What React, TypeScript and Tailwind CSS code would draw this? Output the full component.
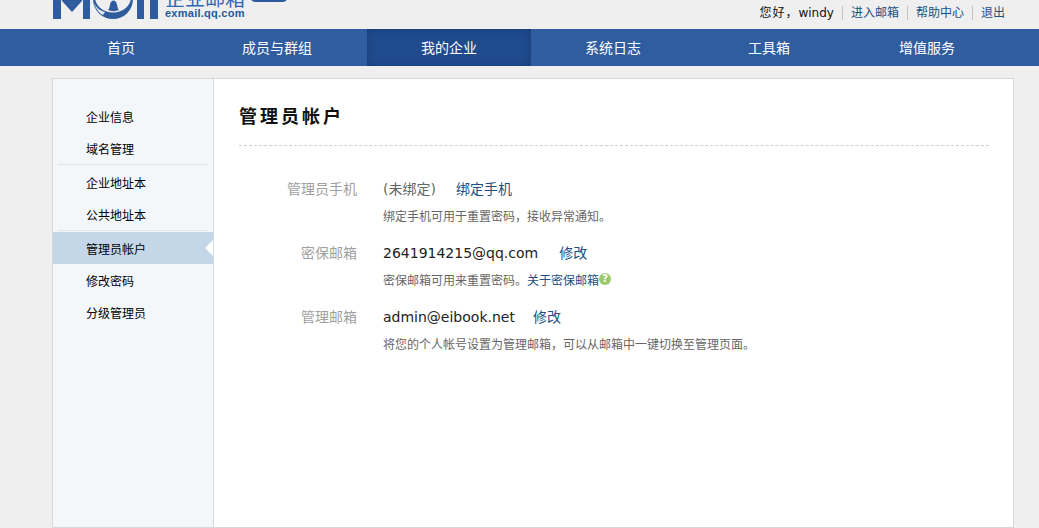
const font = "font-['DejaVu_Sans','Noto_Sans_CJK_SC',sans-serif]";

function NavItem({ label, width, extra, active }: { label: string; width: string; extra?: string; active?: boolean }) {
  return (
    <div
      className={`${width} ${extra ?? ""} h-full flex items-center justify-center pt-[2px] text-[14px] text-white ${
        active ? "bg-[#1f4a8c] shadow-[inset_0_0_6px_#173b73]" : ""
      }`}
    >
      {label}
    </div>
  );
}

function SideItem({ label, active, low }: { label: string; active?: boolean; low?: boolean }) {
  return (
    <div
      className={`relative h-8 flex items-center pl-[33px] text-[12px] text-black ${low ? "pt-[4px]" : "pt-[2px]"} ${active ? "bg-[#c4d7e9]" : ""}`}
    >
      {label}
      {active && (
        <span className="absolute right-0 top-[8px] w-0 h-0 border-y-[8px] border-y-transparent border-r-[8px] border-r-white" />
      )}
    </div>
  );
}

function Row({ label, children, note }: { label: string; children: React.ReactNode; note: React.ReactNode }) {
  return (
    <div className="flex h-16">
      <div className="w-[118px] text-right text-[14px] text-[#a0a0a0] leading-[20px] pt-[9px]">{label}</div>
      <div className="ml-[26px]">
        <div className="flex text-[14px] leading-[20px] pt-[9px] text-[#222]">{children}</div>
        <div className="text-[12px] leading-[18px] mt-[9px] text-[#666] flex items-center">{note}</div>
      </div>
    </div>
  );
}

export default function App() {
  return (
    <div className={`${font} w-[1039px] h-[528px] overflow-hidden bg-[#efefef] flex flex-col`}>
      <header className="h-[29px] shrink-0 flex relative">
        <div className="ml-[53px] w-[106px] h-[19px] overflow-hidden">
          <svg width="106" height="19" viewBox="0 0 106 19" className="block" fill="#2f5c9f">
            <path d="M0 0h8v19H0zM30 0h7v19h-7zM9 0h20v1L19 12 9 1z" />
            <circle cx="60" cy="-1" r="20" />
            <ellipse cx="60" cy="-3" rx="18" ry="15.500" fill="#efefef" />
            <path d="M41 3c3 6 7 8 11 9l-2 3c-4-2-7-6-9-12z" fill="#efefef" />
            <path d="M55 10c1.500-1 1.500-4 2.500-7 1-3.500 5-3.500 6 0 1 3 1 6 2.500 7-3 1.500-8 1.500-11 0z" />
            <path d="M84 0h7v19h-7zM97 0h8v19h-8z" />
          </svg>
        </div>
        <div className="ml-[6px] relative w-[135px] h-[29px] overflow-hidden">
          <div className="absolute left-0 top-[-10px] text-[20px] leading-[18px] text-[#2f6ab0]">企业邮箱</div>
          <div className="absolute left-[85px] top-[-9px] w-[38px] h-[11px] rounded-[5px] border border-[#2f5c9f] bg-[linear-gradient(#fff_0_7px,#2f5c9f_7px)]" />
          <div className="absolute left-0 top-[8px] font-['Liberation_Sans'] text-[11px] leading-[11px] font-bold tracking-[0.25px] text-[#1d5a9e]">exmail.qq.com</div>
        </div>
        <div className="ml-auto mr-[34px] pt-[2px] flex items-center h-[24px] text-[12px]">
          <span className="text-[#111]">
            <span className="tracking-[1px]">您好，</span>windy
          </span>
          <span className="w-px h-[14px] bg-[#c4c4c4] ml-[8px] mr-[8px]" />
          <span className="text-[#215080]">进入邮箱</span>
          <span className="w-px h-[14px] bg-[#c4c4c4] ml-[8px] mr-[8px]" />
          <span className="text-[#215080]">帮助中心</span>
          <span className="w-px h-[14px] bg-[#c4c4c4] ml-[8px] mr-[8px]" />
          <span className="text-[#215080]">退出</span>
        </div>
      </header>
      <nav className="h-[37px] shrink-0 bg-[#305ca0] flex pl-[39px]">
        <NavItem label="首页" width="w-[164px]" />
        <NavItem label="成员与群组" width="w-[148px]" extra="mr-[16px]" />
        <NavItem label="我的企业" width="w-[164px]" active />
        <NavItem label="系统日志" width="w-[164px]" />
        <NavItem label="工具箱" width="w-[148px]" />
        <NavItem label="增值服务" width="w-[168px]" />
      </nav>
      <main className="mt-3 ml-[52px] w-[962px] flex-1 border border-[#d8d8d8] bg-white flex min-h-0">
        <aside className="w-[161px] shrink-0 bg-[#f4f7fa] border-r border-[#d3dae0] pt-[22px]">
          <SideItem label="企业信息" />
          <SideItem label="域名管理" />
          <div className="mx-[5px] h-[3px] -mt-px border-t border-[#dfe5ea]" />
          <SideItem label="企业地址本" />
          <SideItem label="公共地址本" />
          <div className="mx-[5px] h-[2px] -mt-px border-t border-[#dfe5ea]" />
          <SideItem label="管理员帐户" active low />
          <SideItem label="修改密码" low />
          <SideItem label="分级管理员" low />
        </aside>
        <section className="flex-1 pl-[25px] pr-[24px]">
          <h1 className="h-[67px] border-b border-dashed border-[#d0d0d0] text-[18px] leading-[24px] font-bold tracking-[3px] text-[#111] pt-[26px]">
            管理员帐户
          </h1>
          <div className="pt-[24px]">
            <Row
              label="管理员手机"
              note="绑定手机可用于重置密码，接收异常通知。"
            >
              <span className="text-[#666]">(未绑定)</span>
              <span className="ml-[20px] text-[#215080]">绑定手机</span>
            </Row>
            <Row
              label="密保邮箱"
              note={
                <>
                  密保邮箱可用来重置密码。<span className="text-[#215080]">关于密保邮箱</span>
                  <span className="w-[12px] h-[12px] -mt-[4px] rounded-full bg-[#9cc86c] text-white text-[10px] leading-[12px] text-center font-bold">?</span>
                </>
              }
            >
              <span>2641914215@qq.com</span>
              <span className="ml-[21px] text-[#215080]">修改</span>
            </Row>
            <Row label="管理邮箱" note="将您的个人帐号设置为管理邮箱，可以从邮箱中一键切换至管理页面。">
              <span>admin@eibook.net</span>
              <span className="ml-[18px] text-[#215080]">修改</span>
            </Row>
          </div>
        </section>
      </main>
    </div>
  );
}
